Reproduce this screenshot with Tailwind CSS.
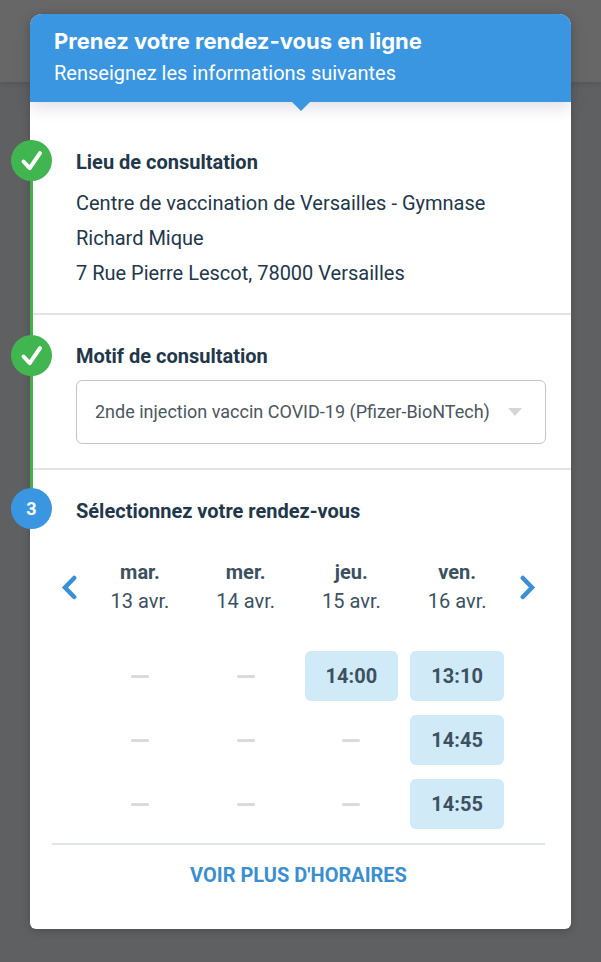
<!DOCTYPE html>
<html lang="fr">
<head>
    <meta charset="UTF-8">
    <meta name="viewport" content="width=device-width, initial-scale=1.0">
    <title>Prenez votre rendez-vous en ligne</title>
    <script src="https://cdn.jsdelivr.net/npm/@tailwindcss/browser@4"></script>
</head>
<body class="relative min-h-screen bg-[#5f6062] px-[30px] pt-[14px] pb-8 font-['Roboto',sans-serif] text-xl text-[#22374a]">

    <!-- Dimmed page header behind the card -->
    <div class="absolute inset-x-0 top-0 h-[82px] bg-[#676767] shadow-[0_2px_6px_rgba(0,0,0,0.12)]"></div>

    <main class="relative rounded-t-xl rounded-b-md bg-white shadow-[0_2px_8px_rgba(0,0,0,0.2)]">

        <header class="relative z-10 rounded-t-xl bg-[#3b96e1] px-6 pt-[11px] pb-[13px] text-white shadow-[0_6px_16px_rgba(60,70,100,0.16)]">
            <h1 class="font-['Inter',sans-serif] text-[22px] leading-8 font-bold">Prenez votre rendez-vous en ligne</h1>
            <p class="leading-8">Renseignez les informations suivantes</p>
            <svg class="absolute top-full left-1/2 h-[9px] w-[18px] -translate-x-1/2" viewBox="0 0 18 9"><path d="M0 0h18L9 9z" fill="#3b96e1"/></svg>
        </header>

        <section class="relative border-b-2 border-[#e2e3e5] pt-[43px] pr-6 pb-[22px] pl-[46px]">
            <span class="absolute top-[38px] bottom-[-2px] left-0 w-[3px] bg-[#41b04c]"></span>
            <span class="absolute top-[38px] left-[-19px] flex size-[41px] items-center justify-center rounded-full bg-[#41b550]">
                <svg class="size-[41px]" viewBox="0 0 41 41" fill="none" stroke="#fff" stroke-width="4" stroke-linecap="round" stroke-linejoin="round"><path d="M12.5 21.5l6.2 6.7L29 13.2"/></svg>
            </span>
            <h2 class="leading-[35px] font-bold">Lieu de consultation</h2>
            <p class="mt-[6px] leading-[35px]">Centre de vaccination de Versailles - Gymnase Richard Mique<br>7 Rue Pierre Lescot, 78000 Versailles</p>
        </section>

        <section class="relative border-b-2 border-[#e2e3e5] pt-6 pr-[25px] pb-6 pl-[46px]">
            <span class="absolute top-0 bottom-[-2px] left-0 w-[3px] bg-[#41b04c]"></span>
            <span class="absolute top-5 left-[-19px] flex size-[41px] items-center justify-center rounded-full bg-[#41b550]">
                <svg class="size-[41px]" viewBox="0 0 41 41" fill="none" stroke="#fff" stroke-width="4" stroke-linecap="round" stroke-linejoin="round"><path d="M12.5 21.5l6.2 6.7L29 13.2"/></svg>
            </span>
            <h2 class="leading-[35px] font-bold"><label for="motif">Motif de consultation</label></h2>
            <div class="relative mt-[6px]">
                <select id="motif" class="block h-16 w-full appearance-none rounded-md border border-[#c3c5c9] bg-white pr-14 pl-[18px] text-lg text-[#4b5661]">
                    <option>2nde injection vaccin COVID-19 (Pfizer-BioNTech)</option>
                </select>
                <svg class="pointer-events-none absolute top-7 right-6 h-2 w-[14px]" viewBox="0 0 14 8"><path d="M0 0h14L7 8z" fill="#d3d5d7"/></svg>
            </div>
        </section>

        <section class="relative pt-6 pr-[26px] pb-9 pl-[22px]">
            <span class="absolute top-0 left-0 h-6 w-[3px] bg-[#41b04c]"></span>
            <span class="absolute top-[18px] left-[-19px] flex size-[41px] items-center justify-center rounded-full bg-[#3b96e1] text-lg font-bold text-white">3</span>
            <h2 class="pl-6 leading-[35px] font-bold">Sélectionnez votre rendez-vous</h2>

            <div class="mt-[29px] flex items-start text-[#3c5160]">
                <button type="button" aria-label="Jours précédents" class="flex h-[58px] w-[35px] items-center justify-center">
                    <svg class="h-[25px] w-[17px]" viewBox="0 0 17 25" fill="none" stroke="#3b8fd6" stroke-width="4.5" stroke-linecap="round" stroke-linejoin="miter"><path d="M13.2 3L4 12.5l9.2 9.5"/></svg>
                </button>
                <div class="flex-1">
                    <table class="w-full table-fixed text-center">
                        <thead>
                            <tr>
                                <th class="pb-7 leading-[29px] font-normal"><b>mar.</b><br>13 avr.</th>
                                <th class="pb-7 leading-[29px] font-normal"><b>mer.</b><br>14 avr.</th>
                                <th class="pb-7 leading-[29px] font-normal"><b>jeu.</b><br>15 avr.</th>
                                <th class="pb-7 leading-[29px] font-normal"><b>ven.</b><br>16 avr.</th>
                            </tr>
                        </thead>
                        <tbody>
                            <tr>
                                <td><span class="mx-auto block h-[3px] w-[18px] rounded-xs bg-[#d8dadd]"></span></td>
                                <td><span class="mx-auto block h-[3px] w-[18px] rounded-xs bg-[#d8dadd]"></span></td>
                                <td class="px-[6px] py-[7px]"><button type="button" class="h-[50px] w-full rounded-md bg-[#d0eaf8] font-bold">14:00</button></td>
                                <td class="px-[6px] py-[7px]"><button type="button" class="h-[50px] w-full rounded-md bg-[#d0eaf8] font-bold">13:10</button></td>
                            </tr>
                            <tr>
                                <td><span class="mx-auto block h-[3px] w-[18px] rounded-xs bg-[#d8dadd]"></span></td>
                                <td><span class="mx-auto block h-[3px] w-[18px] rounded-xs bg-[#d8dadd]"></span></td>
                                <td><span class="mx-auto block h-[3px] w-[18px] rounded-xs bg-[#d8dadd]"></span></td>
                                <td class="px-[6px] py-[7px]"><button type="button" class="h-[50px] w-full rounded-md bg-[#d0eaf8] font-bold">14:45</button></td>
                            </tr>
                            <tr>
                                <td><span class="mx-auto block h-[3px] w-[18px] rounded-xs bg-[#d8dadd]"></span></td>
                                <td><span class="mx-auto block h-[3px] w-[18px] rounded-xs bg-[#d8dadd]"></span></td>
                                <td><span class="mx-auto block h-[3px] w-[18px] rounded-xs bg-[#d8dadd]"></span></td>
                                <td class="px-[6px] py-[7px]"><button type="button" class="h-[50px] w-full rounded-md bg-[#d0eaf8] font-bold">14:55</button></td>
                            </tr>
                        </tbody>
                    </table>
                </div>
                <button type="button" aria-label="Jours suivants" class="flex h-[58px] w-[35px] items-center justify-center">
                    <svg class="h-[25px] w-[17px]" viewBox="0 0 17 25" fill="none" stroke="#3b8fd6" stroke-width="4.5" stroke-linecap="round" stroke-linejoin="miter"><path d="M3.8 3L13 12.5l-9.2 9.5"/></svg>
                </button>
            </div>

            <div class="mt-[7px] border-t-2 border-[#e2e3e5] pt-3 text-center">
                <button type="button" class="h-9 font-bold text-[#3b8fd0]">VOIR PLUS D'HORAIRES</button>
            </div>
        </section>
    </main>

</body>
</html>
